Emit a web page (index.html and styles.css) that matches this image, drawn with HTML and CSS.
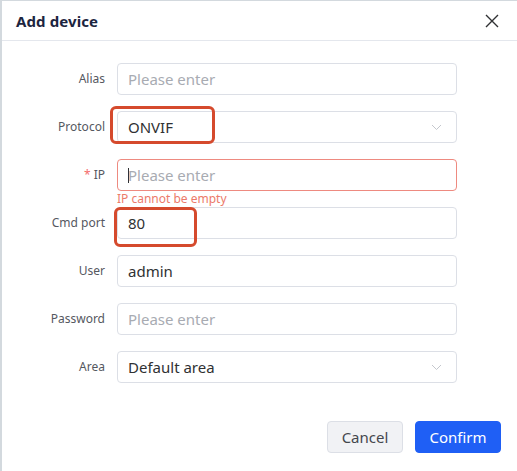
FILE: index.html
```html
<!DOCTYPE html>
<html>
<head>
<meta charset="utf-8">
<link rel="stylesheet" href="styles.css">
</head>
<body>
<div class="dialog">
  <div class="header">
    <span class="title">Add device</span>
    <svg class="close" width="14" height="14" viewBox="0 0 14 14"><path d="M1 1L13 13M13 1L1 13" stroke="#303133" stroke-width="1.4" fill="none"/></svg>
  </div>
  <div class="body">
    <div class="item">
      <label class="label">Alias</label>
      <div class="control"><div class="input"><span class="ph">Please enter</span></div></div>
    </div>
    <div class="item">
      <label class="label">Protocol</label>
      <div class="control">
        <div class="input select"><span class="val">ONVIF</span>
          <svg class="chev" width="11" height="7" viewBox="0 0 11 7"><path d="M1 1L5.5 5.5L10 1" stroke="#c4c7cd" stroke-width="1" fill="none"/></svg>
        </div>
        <div class="mark mark-protocol"></div>
      </div>
    </div>
    <div class="item item-error">
      <label class="label"><span class="req">*</span> IP</label>
      <div class="control">
        <div class="input input-error"><span class="caret"></span><span class="ph">Please enter</span></div>
        <div class="err">IP cannot be empty</div>
      </div>
    </div>
    <div class="item">
      <label class="label">Cmd port</label>
      <div class="control">
        <div class="input"><span class="val">80</span></div>
        <div class="mark mark-port"></div>
      </div>
    </div>
    <div class="item">
      <label class="label">User</label>
      <div class="control"><div class="input"><span class="val">admin</span></div></div>
    </div>
    <div class="item">
      <label class="label">Password</label>
      <div class="control"><div class="input"><span class="ph">Please enter</span></div></div>
    </div>
    <div class="item">
      <label class="label">Area</label>
      <div class="control">
        <div class="input select"><span class="val">Default area</span>
          <svg class="chev" width="11" height="7" viewBox="0 0 11 7"><path d="M1 1L5.5 5.5L10 1" stroke="#c4c7cd" stroke-width="1" fill="none"/></svg>
        </div>
      </div>
    </div>
  </div>
  <div class="footer">
    <button class="btn btn-cancel">Cancel</button>
    <button class="btn btn-confirm">Confirm</button>
  </div>
</div>
</body>
</html>
```
FILE: styles.css
```css
html, body {
  margin: 0;
  padding: 0;
  background: #ffffff;
}
body {
  font-family: "Noto Sans", "Open Sans", Arial, sans-serif;
  color: #303133;
}
.dialog {
  width: 515px;
  height: 470px;
  border-top: 1px solid #d3d9de;
  border-left: 2px solid #d3d9de;
  background: #fff;
  display: flex;
  flex-direction: column;
}
.header {
  height: 39px;
  border-bottom: 1px solid #e4e7ed;
  display: flex;
  align-items: center;
  justify-content: space-between;
  padding: 0 18px 0 14px;
}
.title {
  font-size: 15px;
  font-weight: 700;
  color: #1c2540;
  letter-spacing: 0.1px;
}
.close {
  display: block;
  margin-top: 1px;
}
.body {
  padding-top: 22px;
  display: flex;
  flex-direction: column;
  gap: 16px;
}
.item {
  display: grid;
  grid-template-columns: 103px 340px;
  column-gap: 12px;
  align-items: start;
}
.label {
  font-size: 12px;
  color: #55585f;
  text-align: right;
  line-height: 32px;
  height: 32px;
}
.req {
  color: #f56c6c;
}
.control {
  position: relative;
}
.input {
  box-sizing: border-box;
  height: 32px;
  border: 1px solid #dcdfe6;
  border-radius: 4px;
  display: flex;
  align-items: center;
  padding: 0 10px;
  font-size: 15px;
  position: relative;
}
.ph {
  color: #a8abb2;
}
.val {
  color: #303133;
}
.select {
  justify-content: space-between;
  padding-right: 14px;
}
.chev {
  display: block;
}
.input-error {
  border-color: #ee8a80;
}
.caret {
  display: block;
  width: 1px;
  height: 15px;
  background: #303133;
  margin-right: -1px;
}
.err {
  height: 16px;
  line-height: 16px;
  font-size: 12px;
  color: #ec7a6a;
  margin-bottom: -16px;
}
.mark {
  position: absolute;
  box-sizing: border-box;
  border: 3px solid #d54a2d;
  border-radius: 6px;
  pointer-events: none;
}
.mark-protocol {
  left: -7px;
  top: -5px;
  width: 105px;
  height: 38px;
}
.mark-port {
  left: -3px;
  top: 0px;
  width: 83px;
  height: 40px;
}
.footer {
  margin-top: auto;
  display: flex;
  justify-content: flex-end;
  gap: 12px;
  padding: 0 16px 18px 0;
}
.btn {
  height: 32px;
  border-radius: 4px;
  font-family: inherit;
  font-size: 15px;
  padding: 0;
  cursor: pointer;
}
.btn-cancel {
  width: 76px;
  background: #f1f2f5;
  border: 1px solid #dcdfe6;
  color: #44474d;
}
.btn-confirm {
  width: 86px;
  background: #1f5ff5;
  border: 1px solid #1f5ff5;
  color: #ffffff;
}
```
